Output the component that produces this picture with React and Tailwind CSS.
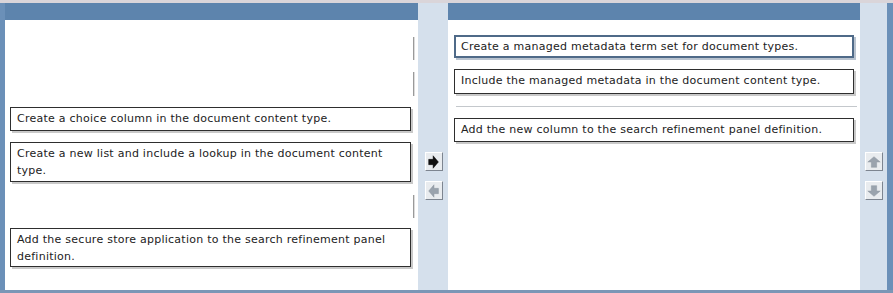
import React from "react";

const font = { fontFamily: '"DejaVu Sans", Verdana, sans-serif' };

function Box({ children, w, h, mt, selected }) {
  return (
    <div
      className={
        "bg-white text-[11px] leading-[17px] tracking-[0.25px] text-[#222] pr-2 " +
        (selected
          ? "border-2 border-[#4f6a88] shadow-[2px_2px_0_#b9c3cf] pl-[5px] pt-[1px]"
          : "border border-[#2e2e2e] shadow-[2px_2px_0_#c9c9c9] pl-[6px] pt-[2px]")
      }
      style={{ width: w, height: h, marginTop: mt }}
    >
      {children}
    </div>
  );
}

function Slot({ h, mt }) {
  return (
    <div className="flex justify-end" style={{ height: h, marginTop: mt, width: 404 }}>
      <div className="w-[1px] h-full bg-[#9a9a9a] shadow-[1px_0_0_#dcdcdc]" />
    </div>
  );
}

function ArrowBtn({ dir, active }) {
  const fill = active ? "#111" : "#9aa3ad";
  let pts;
  if (dir === "right") pts = "3,6 8,6 8,2 14,9 8,16 8,12 3,12";
  if (dir === "left") pts = "14,6 9,6 9,2 3,9 9,16 9,12 14,12";
  if (dir === "up") pts = "6,15 6,9 2,9 9,3 16,9 12,9 12,15";
  if (dir === "down") pts = "6,3 6,9 2,9 9,15 16,9 12,9 12,3";
  return (
    <div className="w-[18px] h-[19px] bg-[#e9ecef] border-t border-l border-t-[#ffffff] border-l-[#ffffff] border-r border-b border-r-[#7d8590] border-b-[#7d8590] flex items-center justify-center">
      <svg width="17" height="18" viewBox="0 0 18 18">
        <polygon points={pts} fill={fill} stroke={active ? "#000" : "#8a939d"} strokeWidth="0.5" />
      </svg>
    </div>
  );
}

export default function App() {
  return (
    <div className="w-[893px] h-[293px] flex flex-col bg-[#d5e0ec] overflow-hidden" style={font}>
      <div className="h-[3px] bg-[#dad5d9]" />
      <div className="flex flex-1">
        <div className="w-[5px] bg-[#6b90b8]" />
        <div className="w-[413px] flex flex-col">
          <div className="h-[17px] bg-[#5d84ad]" />
          <div className="flex-1 bg-white flex flex-col pl-[5px]">
            <Slot h={23} mt={17} />
            <Slot h={24} mt={12} />
            <Box w={401} h={24} mt={11}>Create a choice column in the document content type.</Box>
            <Box w={401} h={40} mt={11}>Create a new list and include a lookup in the document content type.</Box>
            <Slot h={23} mt={13} />
            <Box w={401} h={39} mt={10}>Add the secure store application to the search refinement panel definition.</Box>
          </div>
        </div>
        <div className="w-[30px] bg-[#d5e0ec] flex flex-col items-center pt-[149px] gap-[10px] pl-[2px]">
          <ArrowBtn dir="right" active />
          <ArrowBtn dir="left" />
        </div>
        <div className="w-[412px] flex flex-col">
          <div className="h-[17px] bg-[#5d84ad]" />
          <div className="flex-1 bg-white flex flex-col pl-[6px]">
            <Box w={400} h={23} mt={15} selected>Create a managed metadata term set for document types.</Box>
            <Box w={400} h={25} mt={11}>Include the managed metadata in the document content type.</Box>
            <div className="w-[401px] h-[1px] bg-[#c4c8cc] mt-[12px] ml-[2px]" />
            <Box w={400} h={24} mt={11}>Add the new column to the search refinement panel definition.</Box>
          </div>
        </div>
        <div className="w-[27px] bg-[#d5e0ec] flex flex-col items-center pt-[149px] gap-[10px]">
          <ArrowBtn dir="up" />
          <ArrowBtn dir="down" />
        </div>
        <div className="w-[6px] bg-[#6b90b8]" />
      </div>
      <div className="h-[3px] bg-[#7b96b6]" />
    </div>
  );
}
